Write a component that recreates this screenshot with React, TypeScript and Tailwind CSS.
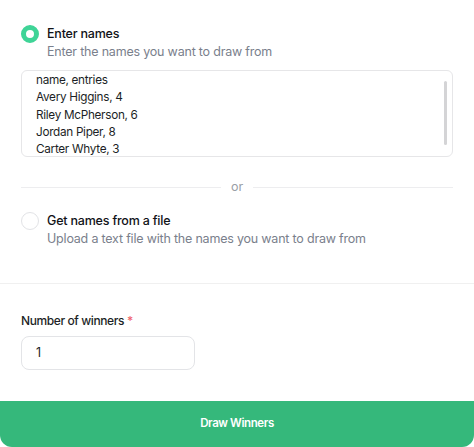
import React from "react";

export default function App() {
  const lines = ["name, entries", "Avery Higgins, 4", "Riley McPherson, 6", "Jordan Piper, 8", "Carter Whyte, 3"];
  return (
    <div
      className="w-[474px] h-[447px] bg-white flex flex-col overflow-hidden rounded-b-[12px]"
      style={{ fontFamily: "Inter, 'Noto Sans', sans-serif" }}
    >
      <div className="px-[21px] pt-[25px] pb-[35px] border-b border-[#f0f0f0]">
        <div className="flex items-start gap-[8px]">
          <div className="size-[18px] rounded-full border-[5px] border-[#3fd497] bg-white shrink-0" />
          <div className="flex flex-col">
            <div className="text-[12.5px] tracking-[-0.2px] leading-[18px] font-medium text-[#111318]">Enter names</div>
            <div className="text-[12.5px] tracking-[-0.2px] leading-[18px] text-[#7a808c]">Enter the names you want to draw from</div>
          </div>
        </div>
        <div className="relative mt-[9px] h-[87px] rounded-[6px] border border-[#e6e6e8] overflow-hidden pl-[14px] pt-[1px]">
          <div className="text-[11.75px] tracking-[-0.3px] leading-[17.25px] text-[#1c1f26]">
            {lines.map((l) => (
              <div key={l}>{l}</div>
            ))}
          </div>
          <div className="absolute right-[5px] top-[10px] w-[3px] h-[64px] rounded-full bg-[#d4d4d6]" />
        </div>
        <div className="mt-[21px] flex items-center gap-[10px]">
          <div className="flex-1 h-px bg-[#ededef]" />
          <div className="text-[12.5px] leading-[18px] text-[#9a9ea6]">or</div>
          <div className="flex-1 h-px bg-[#ededef]" />
        </div>
        <div className="mt-[16px] flex items-start gap-[8px]">
          <div className="size-[18px] rounded-full border-[1.5px] border-[#e2e3e6] bg-white shrink-0" />
          <div className="flex flex-col">
            <div className="text-[12.5px] tracking-[-0.2px] leading-[18px] font-medium text-[#111318]">Get names from a file</div>
            <div className="text-[12.5px] tracking-[-0.2px] leading-[18px] text-[#7a808c]">Upload a text file with the names you want to draw from</div>
          </div>
        </div>
      </div>
      <div className="px-[21px] pt-[28px]">
        <div className="text-[12px] tracking-[-0.4px] leading-[18px] font-medium text-[#1c1f26]">
          Number of winners<span className="text-[#f0656d] ml-[3px]">*</span>
        </div>
        <div className="mt-[6px] w-[174px] h-[34px] rounded-[8px] border border-[#e3e4e7] flex items-center pl-[14px] text-[12.5px] text-[#1c1f26]">
          1
        </div>
      </div>
      <button className="mt-auto h-[46px] w-full bg-[#35b87b] text-white text-[11.5px] tracking-[-0.4px] font-semibold flex items-center justify-center">
        Draw Winners
      </button>
    </div>
  );
}
